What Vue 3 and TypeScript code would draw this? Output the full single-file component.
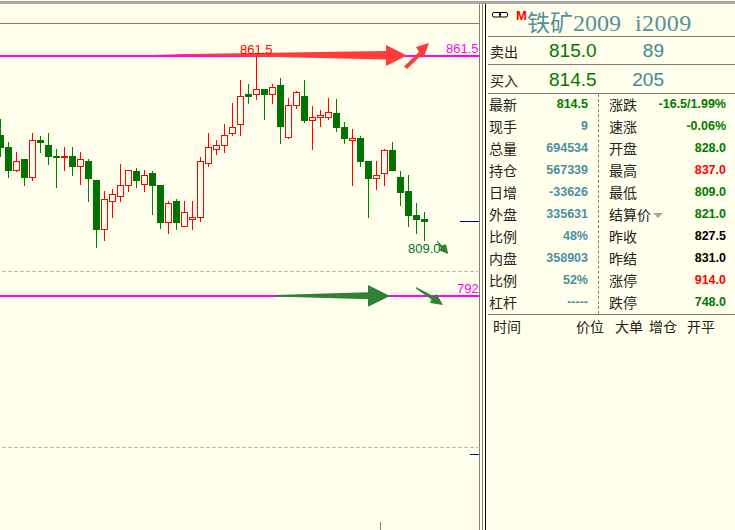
<script setup lang="ts">
type Candle = [number, number, number, number, number]
type Row = { label: string; value: string; tone: string; caret?: boolean }

// [rising, wick top, wick bottom, body top, body bottom]
const raw: Candle[] = [
  [0, 119, 157, 135, 148], [0, 142, 178, 147, 171], [1, 152, 172, 161, 171], [0, 159, 186, 159, 178],
  [1, 133, 181, 140, 178], [0, 136, 153, 140, 143], [0, 133, 165, 145, 157], [0, 149, 188, 156, 158],
  [2, 147, 171, 156, 158], [0, 147, 176, 156, 167], [1, 152, 185, 159, 167], [0, 159, 202, 161, 179],
  [0, 180, 248, 180, 230], [1, 191, 241, 199, 230], [1, 189, 218, 194, 202], [1, 164, 202, 185, 197],
  [1, 170, 192, 170, 186], [0, 168, 188, 171, 181], [1, 170, 192, 175, 185], [0, 171, 215, 173, 186],
  [0, 185, 229, 185, 223], [1, 201, 234, 203, 223], [0, 199, 230, 201, 223], [1, 201, 227, 212, 227],
  [1, 201, 230, 217, 220], [1, 157, 222, 161, 218], [1, 133, 167, 147, 164], [1, 140, 155, 145, 150],
  [1, 124, 153, 135, 146], [1, 103, 136, 127, 134], [1, 80, 136, 96, 125], [0, 84, 104, 94, 97],
  [1, 56, 100, 89, 95], [0, 89, 120, 89, 95], [1, 84, 104, 87, 95], [0, 78, 144, 85, 127],
  [1, 98, 139, 105, 138], [1, 91, 109, 92, 106], [0, 80, 123, 96, 121], [1, 106, 150, 117, 121],
  [1, 110, 127, 115, 118], [1, 98, 120, 112, 118], [0, 99, 132, 113, 128], [0, 122, 144, 127, 139],
  [1, 129, 186, 138, 141], [0, 136, 167, 138, 162], [0, 161, 218, 161, 179], [1, 161, 190, 175, 179],
  [1, 149, 186, 150, 174], [0, 142, 171, 150, 171], [0, 171, 206, 177, 193], [0, 175, 227, 191, 216],
  [0, 203, 234, 215, 220], [0, 212, 241, 219, 222]
]

const candles = raw.map((c, i) => ({
  key: i,
  x: i * 8,
  kind: c[0],
  wickY: c[1],
  wickH: c[2] - c[1],
  bodyY: c[3],
  bodyH: c[4] - c[3]
}))

const left: Row[] = [
  { label: '最新', value: '814.5', tone: 'green' },
  { label: '现手', value: '9', tone: 'teal' },
  { label: '总量', value: '694534', tone: 'teal' },
  { label: '持仓', value: '567339', tone: 'teal' },
  { label: '日增', value: '-33626', tone: 'teal' },
  { label: '外盘', value: '335631', tone: 'teal' },
  { label: '比例', value: '48%', tone: 'teal' },
  { label: '内盘', value: '358903', tone: 'teal' },
  { label: '比例', value: '52%', tone: 'teal' },
  { label: '杠杆', value: '-----', tone: 'teal' }
]

const right: Row[] = [
  { label: '涨跌', value: '-16.5/1.99%', tone: 'green' },
  { label: '速涨', value: '-0.06%', tone: 'green' },
  { label: '开盘', value: '828.0', tone: 'green' },
  { label: '最高', value: '837.0', tone: 'red' },
  { label: '最低', value: '809.0', tone: 'green' },
  { label: '结算价', value: '821.0', tone: 'green', caret: true },
  { label: '昨收', value: '827.5', tone: 'black' },
  { label: '昨结', value: '831.0', tone: 'black' },
  { label: '涨停', value: '914.0', tone: 'red' },
  { label: '跌停', value: '748.0', tone: 'green' }
]
</script>

<template>
  <div class="page">
    <div class="top-bar"></div>
    <div class="main">
      <svg class="chart" width="479" height="526" viewBox="0 4 479 526">
        <rect class="crisp" x="0" y="23" width="479" height="1" fill="#808070" />
        <line class="guide" x1="2" y1="271.5" x2="478" y2="271.5" />
        <line class="guide" x1="2" y1="447.5" x2="478" y2="447.5" />
        <rect class="crisp" x="0" y="55" width="479" height="2" fill="#ff00ff" />
        <rect class="crisp" x="0" y="295" width="479" height="2" fill="#ff00ff" />
        <rect class="crisp" x="460" y="221" width="19" height="1" fill="#000080" />
        <rect class="crisp" x="470" y="454" width="9" height="1" fill="#0000c8" />
        <rect class="crisp" x="380" y="522" width="1" height="8" fill="#808080" />

        <g v-for="c in candles" :key="c.key" class="crisp">
          <rect :x="c.x" :y="c.wickY" width="1" :height="c.wickH" :fill="c.kind ? '#ff0000' : '#008000'" />
          <rect v-if="c.kind === 0" :x="c.x - 3" :y="c.bodyY" width="7" :height="c.bodyH" fill="#007300" />
          <rect v-else-if="c.kind === 2" :x="c.x - 3" :y="c.bodyY" width="7" :height="c.bodyH" fill="#ff0000" />
          <rect
            v-else
            :x="c.x - 2.5"
            :y="c.bodyY + 0.5"
            width="6"
            :height="c.bodyH - 1"
            fill="#ffffeb"
            stroke="#ff0000"
            stroke-width="1"
          />
        </g>

        <polygon points="155,54.5 386,51 386,45 407,55.5 386,66 386,59.5 230,56" fill="#ff3b3b" />
        <polygon points="404,66.5 419,52 416,47 429,43 424,57 421.5,55 407,69" fill="#ff3b3b" />
        <polygon points="275,295 368,292.3 368,285 390,296 368,306.7 368,299.3 275,296.5" fill="#318035" />
        <polygon points="416,287 434,296.5 436.7,294 443,305 430,303 431.5,299.5 416,288.5" fill="#318035" />
        <polygon points="437.3,240.7 442,245.5 446,244.3 448.3,254 439.3,250.5 441,248 437,242" fill="#318035" />

        <text x="240" y="54" class="label" fill="#ff0000">861.5</text>
        <text x="446" y="53" class="label" fill="#ff00ff">861.5</text>
        <text x="408" y="253" class="label" fill="#006f2e">809.0</text>
        <text x="457" y="293" class="label" fill="#ff00ff">792</text>
      </svg>

      <div class="rails"></div>

      <section class="panel">
        <header class="head">
          <svg class="link" width="16" height="6" viewBox="0 0 16 6">
            <rect x="0.5" y="0.5" width="8" height="4.5" rx="1.5" fill="none" stroke="#000" />
            <rect x="7.5" y="0.5" width="8" height="4.5" rx="1.5" fill="none" stroke="#000" />
          </svg>
          <span class="m">M</span>
          <span class="title">
            <span>铁矿</span>
            <span class="code">2009</span>
            <span class="code code-gap">i2009</span>
          </span>
        </header>

        <div class="book sell">
          <span class="book-label">卖出</span>
          <span class="price">815.0</span>
          <span class="size">89</span>
        </div>
        <div class="book buy">
          <span class="book-label">买入</span>
          <span class="price">814.5</span>
          <span class="size">205</span>
        </div>

        <div class="stats">
          <div class="col col-left">
            <div v-for="r in left" :key="r.label + r.value" class="row">
              <span class="row-label">{{ r.label }}</span>
              <span class="row-value" :class="r.tone">{{ r.value }}</span>
            </div>
          </div>
          <div class="col col-right">
            <div v-for="r in right" :key="r.label" class="row">
              <span class="row-label">{{ r.label }}<i v-if="r.caret" class="caret"></i></span>
              <span class="row-value" :class="r.tone">{{ r.value }}</span>
            </div>
          </div>
        </div>

        <div class="ticks">
          <span>时间</span>
          <span>价位</span>
          <span>大单</span>
          <span>增仓</span>
          <span>开平</span>
        </div>
      </section>
    </div>
  </div>
</template>

<style>
html,
body {
  margin: 0;
  background: #ffffeb;
}
</style>

<style scoped>
.page {
  width: 735px;
  height: 530px;
  display: flex;
  flex-direction: column;
  overflow: hidden;
  background: #ffffeb;
  font-family: "Liberation Sans", "Noto Sans CJK SC", sans-serif;
}
.top-bar {
  height: 3px;
  margin-top: 1px;
  background: #a9a9a9;
  flex: none;
}
.main {
  flex: 1;
  display: flex;
  min-height: 0;
}
.chart {
  flex: none;
  display: block;
}
.crisp {
  shape-rendering: crispEdges;
}
.guide {
  stroke: #bdbdb0;
  stroke-width: 1;
  stroke-dasharray: 4 2;
  shape-rendering: crispEdges;
}
.label {
  font-family: "Liberation Sans", sans-serif;
  font-size: 13px;
}
.rails {
  flex: none;
  box-sizing: border-box;
  width: 4px;
  margin-right: 2px;
  border-left: 1px solid #808080;
  border-right: 1px solid #808080;
}
.panel {
  flex: 1;
  min-width: 0;
  border-left: 1px solid #000;
  display: flex;
  flex-direction: column;
  color: #222;
}
.head {
  height: 32px;
  display: flex;
  align-items: flex-start;
  border-bottom: 1px solid #808078;
  margin-left: 2px;
}
.link {
  display: block;
  margin: 8px 0 0 4px;
}
.m {
  margin: 4px 0 0 8px;
  font: bold 13px/15px "Liberation Sans", sans-serif;
  color: #ff0000;
  width: 11px;
}
.title {
  display: flex;
  align-items: baseline;
  margin: 5px 0 0 0;
  font-family: "Liberation Serif", "Noto Sans CJK SC", serif;
  font-size: 23px;
  line-height: 28px;
  color: #52929e;
}
.code {
  font-size: 24px;
}
.code-gap {
  margin-left: 14px;
  letter-spacing: 0.4px;
}
.book {
  display: flex;
  align-items: center;
  border-bottom: 1px solid #808078;
  margin-left: 2px;
}
.sell {
  height: 27px;
}
.buy {
  height: 28px;
}
.buy span {
  margin-top: 2px;
}
.sell .price,
.sell .size {
  margin-top: 1px;
}
.book-label {
  width: 59px;
  padding-left: 2px;
  font-size: 14px;
}
.price {
  width: 60px;
  font-size: 19px;
  color: #007800;
}
.size {
  width: 55px;
  text-align: right;
  font-size: 19px;
  color: #3f8a97;
}
.stats {
  display: flex;
  height: 220px;
  flex: none;
}
.col {
  display: flex;
  flex-direction: column;
}
.col-left {
  width: 113px;
  box-sizing: border-box;
  padding: 0 10px 0 3px;
  border-right: 1px dashed #808080;
}
.col-right {
  flex: 1;
  padding: 0 9px 0 10px;
}
.row {
  height: 22px;
  box-sizing: border-box;
  padding-bottom: 2px;
  display: flex;
  align-items: center;
  justify-content: space-between;
}
.row-label {
  font-size: 14px;
  display: flex;
  align-items: center;
}
.row-value {
  font-size: 12.5px;
  font-weight: bold;
}
.teal {
  color: #4a8fa3;
}
.green {
  color: #007a00;
}
.red {
  color: #ff0000;
}
.black {
  color: #000;
}
.caret {
  width: 0;
  height: 0;
  margin: 3px 0 0 2px;
  border-left: 5px solid transparent;
  border-right: 5px solid transparent;
  border-top: 5px solid #a6a6a6;
}
.ticks {
  margin-left: 2px;
  border-top: 1px solid #808070;
  display: grid;
  grid-template-columns: 83px 39px 34px 38px auto;
  padding: 1px 0 0 5px;
  font-size: 14px;
  line-height: 22px;
}
</style>
